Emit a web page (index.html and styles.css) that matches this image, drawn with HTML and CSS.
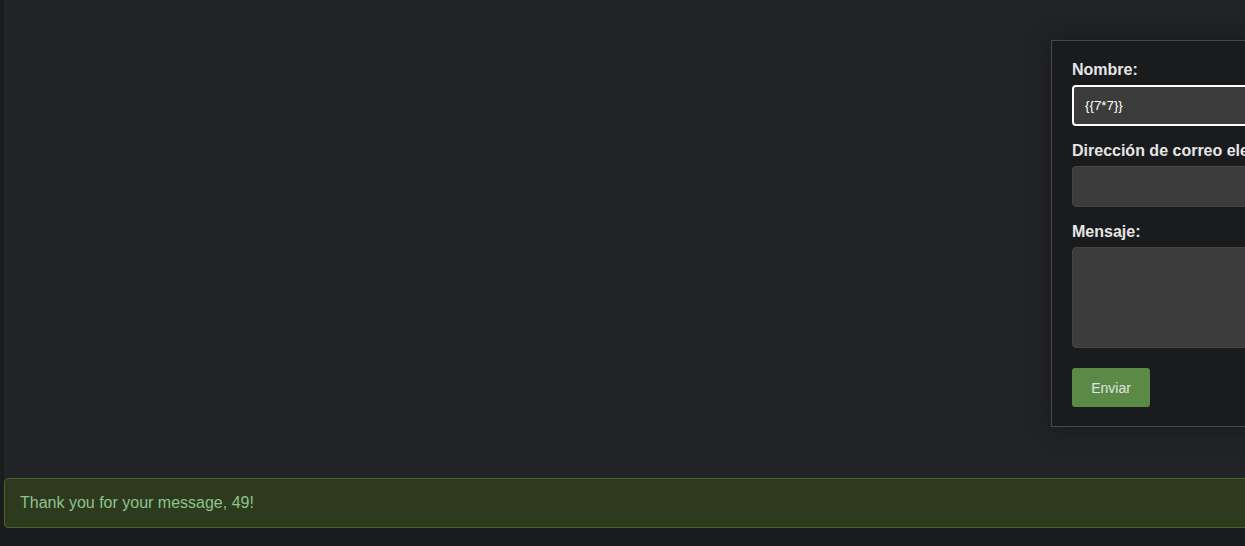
FILE: index.html
```html
<!DOCTYPE html>
<html lang="es">
<head>
  <meta charset="utf-8">
  <title>Contacto</title>
  <link rel="stylesheet" href="styles.css">
</head>
<body>
  <div class="page">
    <div class="main">
      <form class="contact-card">
        <label class="field-label" for="nombre">Nombre:</label>
        <input class="field-input focused" id="nombre" type="text" value="{{7*7}}">
        <label class="field-label" for="email">Dirección de correo electrónico:</label>
        <input class="field-input" id="email" type="email">
        <label class="field-label" for="mensaje">Mensaje:</label>
        <textarea class="field-input field-area" id="mensaje"></textarea>
        <button class="btn-send" type="button">Enviar</button>
      </form>
    </div>
    <div class="alert-success">Thank you for your message, 49!</div>
  </div>
</body>
</html>
```

FILE: styles.css
```css
* {
  margin: 0;
  padding: 0;
  box-sizing: border-box;
}
html, body {
  height: 100%;
}
body {
  background-color: #1b1c1e;
  font-family: 'Liberation Sans', Arial, sans-serif;
  overflow: hidden;
}
.page {
  margin-left: 4px;
  width: 1700px;
}
.main {
  background-color: #222326;
  padding: 40px 0 51px 1047px;
}
.contact-card {
  display: flex;
  flex-direction: column;
  width: 420px;
  padding: 20px 20px 19px;
  background-color: #1a1b1d;
  border: 1px solid #47494c;
  box-shadow: 0 0 24px rgba(0, 0, 0, 0.3);
}
.field-label {
  font-size: 16px;
  font-weight: bold;
  line-height: 18px;
  color: #e6e6e6;
  margin-bottom: 6px;
  white-space: nowrap;
}
.field-input {
  height: 41px;
  margin-bottom: 16px;
  padding: 0 12px;
  background-color: #3c3c3c;
  border: 1px solid #444548;
  border-radius: 4px;
  color: #ffffff;
  font-family: 'Liberation Sans', Arial, sans-serif;
  font-size: 13.33px;
}
.field-input.focused {
  border: 2px solid #ffffff;
  padding-left: 11px;
}
.field-area {
  height: 101px;
  margin-bottom: 20px;
  resize: none;
}
.btn-send {
  align-self: flex-start;
  width: 78px;
  height: 39px;
  background-color: #5a8a46;
  color: #e2e2e2;
  border: none;
  border-radius: 3px;
  font-family: 'Liberation Sans', Arial, sans-serif;
  font-size: 14px;
  cursor: pointer;
}
.alert-success {
  height: 50px;
  padding: 0 15px;
  display: flex;
  align-items: center;
  background-color: #2e3a1d;
  border: 1px solid #48652a;
  border-radius: 4px;
  color: #8cc48e;
  font-size: 16px;
}
```
